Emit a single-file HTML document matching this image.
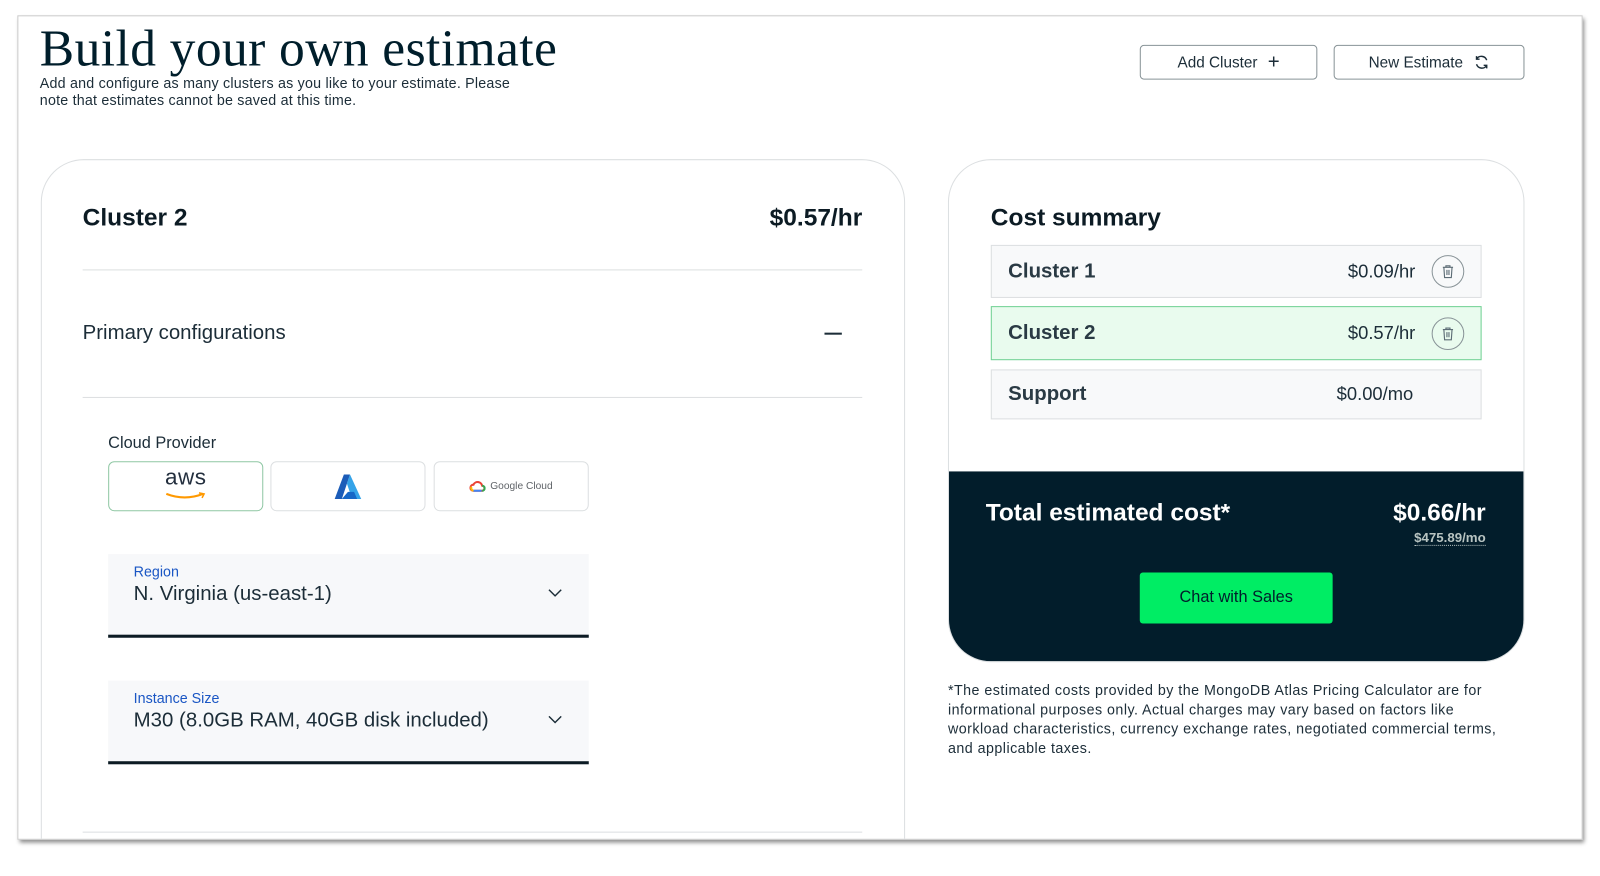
<!DOCTYPE html>
<html><head><meta charset="utf-8"><style>
*{box-sizing:border-box;margin:0;padding:0}
body{width:1600px;height:858px;background:#fff;position:relative;overflow:hidden;font-family:"Liberation Sans",sans-serif;color:#1c2d38}
#wrap{position:absolute;left:0;top:0;width:1600px;height:858px;transform:scale(1.0204);transform-origin:0 0}
.a{position:absolute}
.frame{left:17px;top:15px;width:1534px;height:808px;border:1px solid #ccc;box-shadow:2px 3px 4px rgba(0,0,0,.45);background:#fff;overflow:hidden}
.in{position:absolute;left:-18px;top:-16px;width:1600px;height:858px}
.btn{border:1px solid #889397;border-radius:4px;font-size:15px;display:flex;align-items:center;justify-content:center;gap:10px;color:#1c2d38}
.hr{height:1px;background:#dcdfe1}
.row{left:971px;width:481px;border:1px solid #dcdfe1;background:#f8f9fa;display:flex;align-items:center;padding:0 16px;font-size:20px}
.row .n{font-weight:bold;flex:1;color:#2a3a44}
.row .p{font-size:18px;margin-right:16px}
.tr{width:32px;height:32px;border:1px solid #889397;border-radius:50%;display:flex;align-items:center;justify-content:center}
.prov{top:452px;width:152px;height:49px;border:1px solid #dcdfe1;border-radius:6px;display:flex;align-items:center;justify-content:center}
.sel{left:106px;width:471px;height:82px;background:#f7f8fa;border-bottom:3px solid #0c1b24}
.sel .l{position:absolute;left:25px;top:9px;font-size:14px;color:#1a56c4}
.sel .v{position:absolute;left:25px;top:28px;font-size:20px;color:#1c2d38}
.sel svg{position:absolute;right:26px;top:34px}
</style></head><body><div id="wrap">
<div class="a frame"><div class="in">
<div class="a" style="left:39px;top:18px;font-family:'Liberation Serif',serif;font-size:50.5px;color:#001e2b;letter-spacing:0.4px">Build your own estimate</div>
<div class="a" style="left:39px;top:73px;font-size:14px;line-height:17px;color:#1c2d38;width:490px;letter-spacing:0.2px">Add and configure as many clusters as you like to your estimate. Please note that estimates cannot be saved at this time.</div>
<div class="a btn" style="left:1117px;top:44px;width:174px;height:34px">Add Cluster <span style="font-size:20px;font-weight:300">+</span></div>
<div class="a btn" style="left:1307px;top:44px;width:187px;height:34px">New Estimate <svg width="16" height="16" viewBox="0 0 16 16" fill="none" stroke="#1c2d38" stroke-width="1.4"><path d="M13 6A5.5 5.5 0 0 0 3 5M3 2v3h3M3 10a5.5 5.5 0 0 0 10 1M13 14v-3h-3"/></svg></div>

<div class="a" style="left:40px;top:156px;width:847px;height:720px;border:1px solid #dcdfe1;border-radius:42px"></div>
<div class="a" style="left:81px;top:200px;font-size:24px;font-weight:bold;color:#0c1b24">Cluster 2</div>
<div class="a" style="right:755px;top:200px;font-size:24px;font-weight:bold;color:#0c1b24">$0.57/hr</div>
<div class="a hr" style="left:81px;top:264px;width:764px"></div>
<div class="a" style="left:81px;top:315px;font-size:20px;color:#1c2d38">Primary configurations</div>
<div class="a" style="left:808px;top:326px;width:17px;height:2px;background:#1c2d38"></div>
<div class="a hr" style="left:81px;top:389px;width:764px"></div>
<div class="a" style="left:106px;top:426px;font-size:16px">Cloud Provider</div>
<div class="a prov" style="left:106px;border-color:#8fc7a4"><div style="text-align:center;line-height:18px"><div style="font-size:22px;color:#232f3e;letter-spacing:0.5px">aws</div><svg width="42" height="8" viewBox="0 0 42 8"><path d="M2 2Q20 9 38 2" stroke="#ff9900" stroke-width="2" fill="none"/><path d="M34 1l5 1-2 4" stroke="#ff9900" stroke-width="1.5" fill="none"/></svg></div></div>
<div class="a prov" style="left:265px"><svg width="28" height="24" viewBox="0 0 28 24"><path d="M10 0h6L8 24H1z" fill="#1b5cb8"/><path d="M16 0l11 24h-9L13 9z" fill="#35a3e8"/><path d="M8 24l6-7h6l3 7z" fill="#1667c7"/></svg></div>
<div class="a prov" style="left:425px;font-size:10px;color:#5f6368;gap:4px"><svg width="16" height="11" viewBox="0 0 16 11"><path d="M4 10a3 3 0 0 1 0-6 4.5 4.5 0 0 1 8.5 1A2.5 2.5 0 0 1 12 10z" fill="none" stroke="#ea4335" stroke-width="2"/><path d="M4 10h8" stroke="#4285f4" stroke-width="2"/><path d="M2 6a3 3 0 0 0 2 4" stroke="#fbbc04" stroke-width="2" fill="none"/><path d="M12.5 5a2.5 2.5 0 0 1 0 5" stroke="#34a853" stroke-width="2" fill="none"/></svg>Google Cloud</div>
<div class="a sel" style="top:543px"><div class="l">Region</div><div class="v">N. Virginia (us-east-1)</div><svg width="14" height="8" viewBox="0 0 14 8"><path d="M1 1l6 6 6-6" stroke="#1c2d38" stroke-width="1.4" fill="none"/></svg></div>
<div class="a sel" style="top:667px"><div class="l">Instance Size</div><div class="v">M30 (8.0GB RAM, 40GB disk included)</div><svg width="14" height="8" viewBox="0 0 14 8"><path d="M1 1l6 6 6-6" stroke="#1c2d38" stroke-width="1.4" fill="none"/></svg></div>
<div class="a hr" style="left:81px;top:815px;width:764px"></div>

<div class="a" style="left:929px;top:156px;width:565px;height:493px;border:1px solid #dcdfe1;border-radius:42px;overflow:hidden">
<div style="position:absolute;left:0;right:0;top:305px;bottom:0;background:#021d2b"></div></div>
<div class="a" style="left:971px;top:200px;font-size:24px;font-weight:bold;color:#0c1b24">Cost summary</div>
<div class="a row" style="top:240px;height:52px"><span class="n">Cluster 1</span><span class="p">$0.09/hr</span><div class="tr"><svg width="12" height="14" viewBox="0 0 12 14" fill="none" stroke="#5c6c75" stroke-width="1.1"><path d="M1 3h10M4 3V1.5h4V3M2 3l.7 10h6.6L10 3M5 5.5v5M7 5.5v5"/></svg></div></div>
<div class="a row" style="top:300px;height:53px;background:#e9fbee;border-color:#71d094"><span class="n">Cluster 2</span><span class="p">$0.57/hr</span><div class="tr"><svg width="12" height="14" viewBox="0 0 12 14" fill="none" stroke="#5c6c75" stroke-width="1.1"><path d="M1 3h10M4 3V1.5h4V3M2 3l.7 10h6.6L10 3M5 5.5v5M7 5.5v5"/></svg></div></div>
<div class="a row" style="top:362px;height:49px"><span class="n">Support</span><span class="p" style="margin-right:50px">$0.00/mo</span></div>
<div class="a" style="left:966px;top:489px;font-size:24px;font-weight:bold;color:#fff">Total estimated cost*</div>
<div class="a" style="right:144px;top:489px;font-size:24px;font-weight:bold;color:#fff">$0.66/hr</div>
<div class="a" style="right:144px;top:520px;font-size:13px;font-weight:bold;color:#b8c4c2;border-bottom:1px dotted #b8c4c2;line-height:14px">$475.89/mo</div>
<div class="a" style="left:1117px;top:561px;width:189px;height:50px;background:#00ed64;border-radius:3px;display:flex;align-items:center;justify-content:center;font-size:16px;color:#001e2b">Chat with Sales</div>
<div class="a" style="left:929px;top:667px;width:560px;font-size:14px;line-height:19px;color:#1c2d38;letter-spacing:0.45px">*The estimated costs provided by the MongoDB Atlas Pricing Calculator are for informational purposes only. Actual charges may vary based on factors like workload characteristics, currency exchange rates, negotiated commercial terms, and applicable taxes.</div>
</div></div>
</div></body></html>
